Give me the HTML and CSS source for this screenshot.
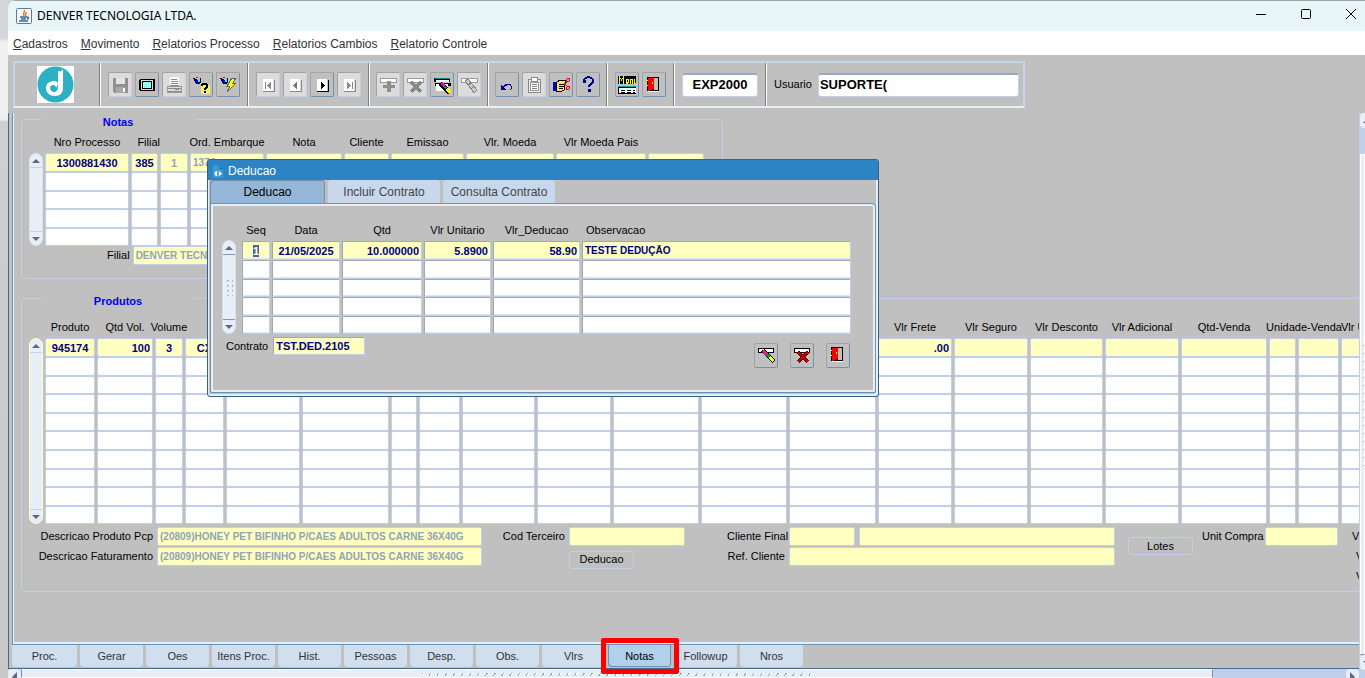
FILE: index.html
```html
<!DOCTYPE html>
<html lang="pt-BR">

<head>
	<meta charset="utf-8">
	<title>DENVER TECNOLOGIA LTDA.</title>
	<link rel="stylesheet" href="styles.css">
</head>

<body>
	<!-- shared icons -->
	<svg class="defs" aria-hidden="true">
		<symbol id="i-door" viewBox="0 0 18 18">
			<path d="M3 2h11v14H3z" fill="#fff"/><path d="M2 1h12v14H2z" fill="#000"/><path d="M9 2h4v12H9z" fill="#c0c0c0"/>
			<path d="M3 2h6v11H7v1H5v1H3z" fill="#f00"/><path d="M2 4h1v1H2zM2 9h1v1H2zM7 6h1v2H7z" fill="#ff0"/>
		</symbol>
		<symbol id="i-erase" viewBox="0 0 18 18">
			<path d="M1 2h16v5H1z" fill="#000"/><path d="M2 3h14v3H2z" fill="#fff"/>
			<path d="M4 5l4-2 10 11-3 3z" fill="#000"/><path d="M5 5h2l3 3-2 2z" fill="#f0c"/><path d="M8 4l2 3-1 1-3-4z" fill="#f22"/>
			<path d="M8 9l3-2 2 3-2 2z" fill="#093"/><path d="M11 12l3-2 3 4-2 2z" fill="#ff0"/>
		</symbol>
	</svg>

	<div class="window">
		<header class="titlebar">
			<svg class="java" viewBox="0 0 16 16">
				<rect x=".5" y=".5" width="15" height="15" rx="1" fill="#f4f6f8" stroke="#5a7898"/>
				<path d="M8 2c2 2-2 3 0 6M10 4c1 1-2 2 0 4" fill="none" stroke="#f07820" stroke-width="1.500"/>
				<path d="M4 9h7c2 0 2 2 0 2M5 11h5M3 13h9" fill="none" stroke="#3a6a9a" stroke-width="1.500"/>
			</svg>
			<span class="title">DENVER TECNOLOGIA LTDA.</span>
			<div class="winbuttons">
				<button aria-label="Minimizar"><svg viewBox="0 0 12 12"><path d="M1 6.500h10" /></svg></button>
				<button aria-label="Maximizar"><svg viewBox="0 0 12 12"><rect x="1.500" y="1.500" width="9" height="9" rx="1" /></svg></button>
				<button aria-label="Fechar"><svg viewBox="0 0 12 12"><path d="M1 1l10 10M11 1L1 11" /></svg></button>
			</div>
		</header>

		<nav class="menubar">
			<a href="#"><u>C</u>adastros</a>
			<a href="#"><u>M</u>ovimento</a>
			<a href="#"><u>R</u>elatorios Processo</a>
			<a href="#"><u>R</u>elatorios Cambios</a>
			<a href="#"><u>R</u>elatorio Controle</a>
		</nav>

		<div class="toolbar-area">
			<div class="toolbar">
				<div class="section logo">
					<svg viewBox="0 0 37 37">
						<rect width="37" height="37" fill="#fff"/><circle cx="18.500" cy="18.500" r="18" fill="#2eb0c4"/>
						<path fill-rule="evenodd" d="M21 5c2 1 4 0 5-2v19c0 5-3 8-8 8s-9-3-9-8 4-7 8-7c2 0 4 1 4 3l-2 4c0-2-1-3-3-3-1 0-3 1-3 3s2 4 4 4 4-2 4-4z" fill="#fff"/>
					</svg>
				</div>
				<div class="section">
					<button class="tool" disabled aria-label="Salvar"><svg viewBox="0 0 18 18"><path d="M2 2h15v15H3l-1-1z" fill="#909090"/><path d="M5 2h9v6H5z" fill="#e4e4e4"/><path d="M5 11h9v6H5z" fill="#a8a8a8"/><path d="M12 12h2v4h-2z" fill="#fff"/></svg></button>
					<button class="tool" aria-label="Tela"><svg viewBox="0 0 18 18"><path d="M2 3h14l1 1v10l-1 1H2l-1-1V4z" fill="#000"/><path d="M3 4h12v10H3z" fill="#ddd"/><path d="M4 5h10v8H4z" fill="#000"/><path d="M5 6h8v6H5z" fill="#8ff"/><path d="M5 7h8M5 9h8M5 11h8" stroke="#fff" stroke-dasharray="1"/></svg></button>
					<button class="tool" disabled aria-label="Imprimir"><svg viewBox="0 0 18 18"><path d="M5 1h9v9H5z" fill="#fff"/><path d="M6 3h6M6 5h7M6 7h7M5 9h9M2 12h14M2 15h14M10 13h4" stroke="#888"/><path d="M2 10h14v6H2z" fill="none" stroke="#999"/></svg></button>
					<button class="tool" aria-label="Entrar consulta"><svg viewBox="0 0 18 18"><path d="M9 9h9v9H9z" fill="#f0f060"/><path d="M1 2l3 1 2 1 3-2v5L6 8H4z" fill="#000"/><path d="M3 4h3v4H5z" fill="#00d"/><path d="M6 3h2v3H6z" fill="#0ff"/><path d="M4 1h2v1H4z" fill="#f00"/><path d="M10 10c0-3 5-3 5 0 0 2-2 2-2 4M13 15v2" fill="none" stroke="#000" stroke-width="2"/></svg></button>
					<button class="tool" aria-label="Executar consulta"><svg viewBox="0 0 18 18"><path d="M1 2l3 1 2 1 3-2v5L6 8H4z" fill="#000"/><path d="M3 4h3v4H5z" fill="#00d"/><path d="M6 3h2v3H6z" fill="#0ff"/><path d="M4 1h2v1H4z" fill="#f00"/><path d="M13 2h4l-3 5h3l-9 9 3-6H8z" fill="#ff0" stroke="#665"/></svg></button>
				</div>
				<div class="section">
					<button class="tool" disabled aria-label="Primeiro"><svg viewBox="0 0 18 18"><path d="M4 3h10v12H4z" fill="#fff"/><path d="M4 15h11V4" stroke="#888" fill="none"/><path d="M6 6h1v7H6zM12 6v7L8 9.500z" fill="#888"/></svg></button>
					<button class="tool" disabled aria-label="Anterior"><svg viewBox="0 0 18 18"><path d="M4 3h10v12H4z" fill="#fff"/><path d="M4 15h11V4" stroke="#888" fill="none"/><path d="M11 6v7L7 9.500z" fill="#777"/></svg></button>
					<button class="tool" aria-label="Proximo"><svg viewBox="0 0 18 18"><path d="M4 3h10v12H4z" fill="#fff"/><path d="M4 15h11V4" stroke="#000" fill="none"/><path d="M8 6v7l4-3.500z" fill="#000"/></svg></button>
					<button class="tool" disabled aria-label="Ultimo"><svg viewBox="0 0 18 18"><path d="M4 3h10v12H4z" fill="#fff"/><path d="M4 15h11V4" stroke="#888" fill="none"/><path d="M7 6v7l4-3.500zM12 6h1v7h-1z" fill="#888"/></svg></button>
				</div>
				<div class="section tight">
					<button class="tool" disabled aria-label="Inserir"><svg viewBox="0 0 18 18"><path d="M1 2h16v4H1z" fill="#fff" stroke="#999"/><path d="M8 5h4v4h4v3h-4v4H8v-4H4V9h4z" fill="#909090"/></svg></button>
					<button class="tool" disabled aria-label="Excluir"><svg viewBox="0 0 18 18"><path d="M1 2h16v4H1z" fill="#fff" stroke="#999"/><path d="M5 6l10 10M15 6L5 16" stroke="#888" stroke-width="3"/></svg></button>
					<button class="tool" aria-label="Limpar tela"><svg viewBox="0 0 18 18"><path d="M1 2h16v4H1zM2 7h16v3H2z" fill="#000"/><path d="M3 4h13v2H3zM3 8h12v7H3z" fill="#fff"/><path d="M2 2h15v1H2z" fill="#088"/><path d="M5 9l4-3 9 9-3 3z" fill="#000"/><path d="M7 8l2-2 3 3-2 2z" fill="#f0c"/><path d="M10 11l2-2 2 3-2 1z" fill="#093"/><path d="M12 14l3-2 3 3-2 2z" fill="#ff0"/></svg></button>
					<button class="tool" disabled aria-label="Limpar registro"><svg viewBox="0 0 18 18"><path d="M1 2h16v4H1z" fill="#fff" stroke="#999"/><path d="M5 5l3-2 9 11-3 3z" fill="#ccc" stroke="#888"/><path d="M8 9l3-2M11 13l3-3" stroke="#777"/></svg></button>
				</div>
				<div class="section tight">
					<button class="tool" aria-label="Desfazer"><svg viewBox="0 0 18 18"><path d="M3 14V8l2 3c3-5 9-4 9 0 0 2-1 3-2 3 2-3 1-5-1-5-2-1-3 1-5 3l3 2z" fill="#000080"/></svg></button>
					<button class="tool" disabled aria-label="Lista"><svg viewBox="0 0 18 18"><path d="M3 3h12v13H3z" fill="#eee" stroke="#888"/><path d="M6 1h6v4H6z" fill="#fff" stroke="#888"/><path d="M5 6h8v8H5z" fill="#fff" stroke="#999"/><path d="M7 8h5M7 10h5M7 12h5" stroke="#888"/></svg></button>
					<button class="tool" aria-label="Editar"><svg viewBox="0 0 18 18"><path d="M1 6h3v9H1z" fill="#00c"/><path d="M4 7l4-3h5v3h-1v7l-2 1H4z" fill="#fd6" stroke="#000"/><path d="M7 8h6M7 10h5M7 12h4" stroke="#000"/><path d="M12 9l4-4M12 7l4 4" stroke="#e00"/><circle cx="16" cy="4" r="1.500" fill="none" stroke="#e00"/><circle cx="16" cy="12" r="1.500" fill="none" stroke="#e00"/></svg></button>
					<button class="tool" aria-label="Ajuda"><svg viewBox="0 0 18 18"><path d="M5 5c0-5 9-5 9 0 0 3-4 3-4 6" fill="none" stroke="#000090" stroke-width="2"/><path d="M9 13h3v3H9zM4 4h3v3H4z" fill="#000090"/></svg></button>
				</div>
				<div class="section">
					<button class="tool" aria-label="Menu"><svg viewBox="0 0 18 18"><path d="M0 0h18v8H0z" fill="#000"/><path d="M1.500 8V1l2 3 2-3v7M8 6h2V3H8v4h2M12.500 8V3h2v5M16.500 3v4h2" fill="none" stroke="#ff0"/><path d="M0 10h18v8H0z" fill="#000"/><path d="M1 12h17v5H1z" fill="#fff"/><path d="M0 10h18v1H0z" fill="#0aa"/><path d="M3 14.500h14M3 16.500h14" stroke="#000" stroke-dasharray="4 2"/></svg></button>
					<button class="tool" aria-label="Sair"><svg><use href="#i-door"/></svg></button>
				</div>
				<div class="section">
					<input class="big code" value="EXP2000" aria-label="Programa">
				</div>
				<div class="section user">
					<label for="usuario">Usuario</label>
					<input class="big" id="usuario" value="SUPORTE(">
				</div>
			</div>
		</div>

		<div class="main">
			<div class="frame">
				<div class="canvas">
					<fieldset class="notas">
						<legend><span>Notas</span></legend>
						<div class="block">
							<div class="scroll"><button class="up" aria-label="Acima"></button><button class="down" aria-label="Abaixo"></button></div>
							<table class="grid" id="notas"></table>
						</div>
						<div class="filial">
							<label for="filial">Filial</label>
							<input class="field dim" id="filial" value="DENVER TECNOLOGIA LTDA.">
						</div>
					</fieldset>

					<fieldset class="produtos">
						<legend><span>Produtos</span></legend>
						<div class="block">
							<div class="scroll yellow"><button class="up" aria-label="Acima"></button><button class="down" aria-label="Abaixo"></button></div>
							<table class="grid" id="produtos"></table>
						</div>
						<div class="details">
							<div class="group desc">
								<label for="pcp">Descricao Produto Pcp</label>
								<input class="field dim" id="pcp" value="(20809)HONEY PET BIFINHO P/CAES ADULTOS CARNE 36X40G">
								<label for="fat">Descricao Faturamento</label>
								<input class="field dim" id="fat" value="(20809)HONEY PET BIFINHO P/CAES ADULTOS CARNE 36X40G">
							</div>
							<div class="group terceiro">
								<label for="terc">Cod Terceiro</label>
								<input class="field" id="terc">
								<button class="btn">Deducao</button>
							</div>
							<div class="group cliente">
								<label for="final">Cliente Final</label>
								<input class="field" id="final">
								<input class="field" aria-label="Nome cliente final">
								<label for="ref">Ref. Cliente</label>
								<input class="field wide" id="ref">
							</div>
							<button class="btn lotes">Lotes</button>
							<div class="group compra">
								<label for="compra">Unit Compra</label>
								<input class="field" id="compra">
							</div>
							<div class="group totals">
								<span>Vlr</span>
								<span class="in">Vlr</span>
								<span class="in">Vlr</span>
							</div>
						</div>
					</fieldset>
				</div>

				<div class="pages">
					<button>Proc.</button>
					<button>Gerar</button>
					<button>Oes</button>
					<button>Itens Proc.</button>
					<button>Hist.</button>
					<button>Pessoas</button>
					<button>Desp.</button>
					<button>Obs.</button>
					<button>Vlrs</button>
					<button class="active">Notas</button>
					<button>Followup</button>
					<button>Nros</button>
				</div>
			</div>
			<div class="vbar"><button class="up" aria-label="Acima"></button><div class="thumb"><i></i></div><button class="down" aria-label="Abaixo"></button></div>
			<div class="hbar"><button class="left" aria-label="Esquerda"></button><div class="thumb"><i></i></div><button class="right" aria-label="Direita"></button></div>
		</div>
	</div>

	<div class="dialog" role="dialog" aria-label="Deducao">
		<div class="dialog-title">
			<svg viewBox="0 0 14 16"><path d="M1 1h8l4 4v11H1z" fill="#3a9ad8"/><path d="M9 1v4h4" fill="none" stroke="#1c6ca8"/><path d="M8 8l4 3-4 3zM6 8v6c-2 0-3-1-3-3s1-3 3-3zM1 11h2" fill="#fff"/></svg>
			Deducao
		</div>
		<div class="dialog-tabs">
			<button class="active">Deducao</button>
			<button>Incluir Contrato</button>
			<button>Consulta Contrato</button>
		</div>
		<div class="dialog-body">
			<div class="block">
				<div class="scroll grip"><button class="up" aria-label="Acima"></button><i></i><button class="down" aria-label="Abaixo"></button></div>
				<table class="grid inset" id="deducao"></table>
			</div>
			<div class="contrato">
				<label for="contrato">Contrato</label>
				<input class="field" id="contrato" value="TST.DED.2105">
				<div class="actions">
					<button class="tool" aria-label="Limpar"><svg><use href="#i-erase"/></svg></button>
					<button class="tool" aria-label="Excluir"><svg viewBox="0 0 18 18"><path d="M1 2h16v5H1z" fill="#000"/><path d="M2 3h14v3H2z" fill="#fff"/><path d="M5 6l10 10M15 6L5 16" stroke="#400" stroke-width="4"/><path d="M5 6l10 10M15 6L5 16" stroke="#c00000" stroke-width="2.500"/></svg></button>
					<button class="tool" aria-label="Sair"><svg><use href="#i-door"/></svg></button>
				</div>
			</div>
		</div>
	</div>

	<div class="marker"></div>

	<script src="script.js"></script>
</body>

</html>
```
FILE: styles.css
```css
* {
	box-sizing: border-box;
}

body {
	margin: 0;
	height: 100vh;
	overflow: hidden;
	position: relative;
	background: linear-gradient(#d4d6da 0, #d4d6da 38px, #f0f0f0 42px, #f0f0f0 119px, #cfcfcf 122px, #c8c8c8);
	font: 11px/15px "Liberation Sans", Arial, sans-serif;
	color: #000;
}

button,
input {
	font: inherit;
	color: inherit;
	margin: 0;
	padding: 0;
	outline: none;
}

.defs {
	position: absolute;
	width: 0;
	height: 0;
}

.window {
	margin-left: 8px;
	height: 100vh;
	display: flex;
	flex-direction: column;
	background: #c0c0c0;
	border-top-left-radius: 8px;
	overflow: hidden;
}

/* title + menu */

.titlebar {
	height: 31px;
	flex: none;
	display: flex;
	align-items: center;
	gap: 5px;
	padding-left: 8px;
	background: #e8f6f7;
	border-top: 1px solid #a0a4a8;
	font: 12px/16px "Noto Sans", sans-serif;
}

.java {
	width: 16px;
	height: 16px;
}

.winbuttons {
	margin-left: auto;
	margin-right: -8px;
	display: flex;
}

.winbuttons button {
	width: 45px;
	height: 30px;
	border: 0;
	background: none;
}

.winbuttons svg {
	width: 12px;
	height: 12px;
	fill: none;
	stroke: #000;
}

.menubar {
	height: 24px;
	flex: none;
	display: flex;
	align-items: center;
	gap: 13px;
	padding: 2px 0 0 5px;
	background: #fff;
	font-size: 12px;
}

.menubar a {
	color: #333;
	text-decoration: none;
}

/* toolbar */

.toolbar-area {
	flex: none;
	padding: 6px 5px 5px;
}

.toolbar {
	display: flex;
	width: max-content;
	height: 47px;
	border: 2px solid #c4d6ec;
	border-bottom-color: #e8f0fa;
}

.section {
	display: flex;
	align-items: center;
	justify-content: center;
	gap: 3px;
	padding: 0 7px;
	border-right: 1px solid #808080;
	box-shadow: 1px 0 #fff;
	margin-right: 1px;
}

.section.tight {
	padding: 0 6px;
}

.section:last-child {
	border: 0;
	box-shadow: none;
	margin: 0;
	padding-right: 4px;
}

.section.logo {
	padding: 0 25px 0 22px;
}

.logo svg {
	width: 37px;
	height: 37px;
}

.tool {
	width: 24px;
	height: 25px;
	display: flex;
	align-items: center;
	justify-content: center;
	background: #c0c0c0;
	border: 1px solid #a0a4a8;
	border-right-color: #7090b4;
	border-bottom-color: #7090b4;
	border-radius: 2px;
}

.tool:disabled {
	background: #dcdcdc;
	border-right-color: #c0d0e8;
	border-bottom-color: #c0d0e8;
}

.tool svg {
	width: 18px;
	height: 18px;
	flex: none;
	shape-rendering: crispEdges;
}

.big {
	width: 201px;
	height: 24px;
	padding: 0 1px 2px;
	border: 1px solid #c0d0e8;
	border-top: 2px solid #98a8c0;
	border-radius: 3px;
	background: #fff;
	font-size: 13px;
	font-weight: bold;
}

.code {
	width: 76px;
	text-align: center;
}

.user {
	gap: 6px;
}

/* work area */

.main {
	flex: 1;
	min-height: 0;
	display: grid;
	grid-template: 1fr 9px / minmax(0, 1fr) 6px;
}

.frame {
	min-height: 0;
	display: flex;
	flex-direction: column;
	padding-left: 3px;
	border-left: 1px solid #48688f;
	border-bottom: 1px solid #48688f;
}

.canvas {
	flex: 1;
	min-height: 0;
	overflow: hidden;
	padding-left: 8px;
	border-left: 1px solid #7090b4;
	border-bottom: 1px solid #7090b4;
	box-shadow: inset 1px -2px #e8eef6;
}

fieldset {
	margin: 0;
	min-width: 0;
	padding: 0 0 0 7px;
	border: 1px solid #c0d0e8;
	border-radius: 4px;
}

legend {
	width: 154px;
	height: 13px;
	margin-left: 12px;
	padding: 0;
	line-height: 19px;
	font-weight: bold;
	color: #0000f0;
}

legend span {
	display: block;
	text-align: center;
}

.notas {
	width: 702px;
	padding-top: 7px;
	padding-bottom: 13px;
}

.produtos {
	margin-top: 13px;
	margin-right: -80px;
	padding-top: 13px;
	padding-bottom: 5px;
}

.block {
	display: flex;
	gap: 2px;
}

.scroll {
	width: 14px;
	flex: none;
	margin-top: 20px;
	display: flex;
	flex-direction: column;
	justify-content: space-between;
	align-items: center;
	background: #e8eef6;
	border: 1px solid #d8e2f0;
	border-radius: 7px;
}

.yellow {
	border-color: #ffffc0;
}

.scroll button {
	width: 12px;
	height: 14px;
	border: 0;
	background: none;
	display: flex;
	align-items: center;
	justify-content: center;
}

.scroll .up {
	border-bottom: 1px solid #c0d0e8;
}

.scroll .down {
	border-top: 1px solid #c0d0e8;
}

.up::before,
.down::before {
	content: "";
	border: 4px solid transparent;
	border-top-width: 0;
	border-bottom-color: #606880;
}

.down::before {
	border-width: 4px 4px 0;
	border-color: #606880 transparent;
}

.grip .up,
.grip .down {
	border-color: #8098b8;
}

.grip i {
	width: 8px;
	height: 18px;
	background: radial-gradient(circle, #a8b8d0 1px, transparent 1px) 0 0 / 5px 5px;
}

/* record grids */

.grid {
	table-layout: fixed;
	border-collapse: collapse;
	flex: none;
}

.grid th,
.grid td {
	padding: 0;
	vertical-align: top;
}

.grid th {
	height: 20px;
	font-weight: normal;
	line-height: 18px;
	white-space: nowrap;
	padding-right: 2px;
}

/* lets a label wider than its column stay centred on it */
.grid th span {
	display: inline-block;
	margin: 0 -10px;
}

.grid .start {
	text-align: left;
	padding-left: 14px;
}

.grid .end {
	text-align: right;
	padding-right: 10px;
}

.grid .flush {
	text-align: left;
	padding-left: 10px;
}

.grid td {
	height: 19px;
	padding-right: 2px;
}

/* ten records fill the same height as two groups of five */
.grid tbody tr:nth-child(5n+3) td,
.grid tbody tr:nth-child(5n) td {
	height: 18px;
}

.grid input {
	display: block;
	width: 100%;
	height: 19px;
	padding: 0 2px;
	background: #fff;
	border: 1px solid #c0d0e8;
	border-radius: 2px;
	text-align: center;
	font-weight: bold;
	color: #000080;
}

.grid tbody tr:nth-child(5n+3) input,
.grid tbody tr:nth-child(5n) input {
	height: 18px;
}

.grid tbody tr:first-child input {
	background: #ffffc0;
}

.grid .num {
	text-align: right;
}

.grid .text {
	text-align: left;
	font-size: 10px;
}

.grid .dim,
.dim {
	color: #90a4b8;
}

.inset th {
	line-height: 21px;
}

.inset input {
	border-top-color: #a0a8b4;
	border-left-color: #a0a8b4;
	box-shadow: inset 0 -1px #dce6f4;
}

/* loose fields */

.field {
	height: 19px;
	min-width: 0;
	padding: 0 2px;
	background: #ffffc0;
	border: 1px solid #c0d0e8;
	border-radius: 2px;
	font-weight: bold;
}

.field.dim {
	font-size: 10px;
}

.filial {
	display: flex;
	align-items: center;
	gap: 3px;
	padding-left: 78px;
}

.filial .field {
	width: 400px;
}

.details {
	display: flex;
	align-items: flex-start;
	margin-top: 2px;
	height: 60px;
}

.group {
	display: grid;
	grid-auto-rows: 20px;
	column-gap: 4px;
	align-items: center;
	text-align: right;
	white-space: nowrap;
	flex: none;
}

.desc {
	grid-template-columns: 124px 325px;
}

.terceiro {
	grid-template-columns: 63px 116px;
	margin-left: 20px;
}

.terceiro .btn {
	grid-column: 2;
	width: 65px;
	margin-top: 7px;
}

.cliente {
	grid-template-columns: 58px 66px 256px;
	margin-left: 42px;
}

.wide {
	grid-column: span 2;
}

.compra {
	grid-template-columns: 59px 73px;
	margin-left: 9px;
}

.totals {
	margin-left: 14px;
	text-align: left;
}

.in {
	padding-left: 4px;
}

.btn {
	width: 65px;
	height: 18px;
	flex: none;
	background: #c0c0c0;
	border: 1px solid #c0d0e8;
	border-radius: 3px;
}

.lotes {
	margin: 11px 0 0 13px;
}

/* page tabs */

.pages {
	display: flex;
	gap: 3px;
	height: 23px;
	flex: none;
}

.pages button {
	width: 63px;
	height: 22px;
	border: 0;
	border-radius: 0 0 4px 4px;
	background: #d0deee;
	color: #333;
}

.pages button:first-child {
	width: 65px;
}

.pages .active {
	background: #b0d0ec;
	box-shadow: inset 1px -1px #7090b4, inset -1px 0 #7090b4;
	color: #000;
}

/* window scrollbars */

.vbar,
.hbar {
	background: #c0d0e8;
	display: flex;
	overflow: hidden;
}

.vbar {
	flex-direction: column;
	padding-left: 1px;
	grid-row: 1 / 3;
	grid-column: 2;
}

.vbar button,
.hbar button {
	border: 0;
	background: #e8eef6;
	flex: none;
	width: 14px;
	height: 15px;
	display: flex;
	align-items: center;
	justify-content: center;
	border-radius: 4px;
}

.vbar .thumb {
	flex: 1;
	margin: 26px 0 0;
	border: 1px solid #fff;
	border-bottom-color: #7090b4;
	background: #e8eef6;
	display: flex;
	align-items: center;
}

.vbar i {
	width: 3px;
	height: 124px;
	margin-left: 2px;
	background: repeating-linear-gradient(#fff 0 2px, #90a4c0 2px 3px, transparent 3px 8px);
}

.vbar .down {
	margin-bottom: 8px;
}

.hbar button {
	width: 13px;
}

.left::before,
.right::before {
	content: "";
	border: 5px solid transparent;
	border-left-width: 0;
	border-right-color: #606880;
}

.right::before {
	border-width: 5px 0 5px 5px;
	border-color: transparent transparent transparent #606880;
}

.hbar .thumb {
	width: 1192px;
	flex: none;
	margin-right: auto;
	border: 1px solid #fff;
	border-left-color: #7090b4;
	border-right-color: #7090b4;
	background: #e8eef6;
	display: flex;
	justify-content: center;
}

.hbar i {
	width: 390px;
	height: 3px;
	margin: 3px 0;
	background: repeating-linear-gradient(120deg, #90a4c0 0 1px, #fff 1px 2px, transparent 2px 7px);
}

/* Deducao dialog */

.dialog {
	position: absolute;
	left: 207px;
	top: 159px;
	width: 672px;
	padding: 0 2px 3px;
	background: #c0c0c0;
	border: 1px solid #38608c;
	border-radius: 3px;
	box-shadow: inset -2px -2px #e8eef6, inset 1px 0 #e8eef6;
}

.dialog-title {
	display: flex;
	align-items: center;
	gap: 4px;
	height: 20px;
	margin: 0 -2px;
	padding: 2px 4px 0;
	background: #2c84c4;
	color: #fff;
	font-size: 12px;
}

.dialog-title svg {
	width: 12px;
	height: 14px;
}

.dialog-tabs {
	display: flex;
	gap: 3px;
}

.dialog-tabs button {
	width: 112px;
	height: 23px;
	padding-top: 2px;
	border: 0;
	border-radius: 4px 4px 0 0;
	background: #c8d8ec;
	color: #444;
	font-size: 12px;
}

.dialog-tabs .active {
	width: 115px;
	background: #94b6d8;
	box-shadow: inset 1px 1px #7090b4, inset -1px 0 #7090b4;
	color: #000;
}

.dialog-body {
	padding: 15px 0 36px 11px;
	border: 1px solid #7090b4;
	border-radius: 0 4px 2px 2px;
	box-shadow: inset 0 0 0 2px #e8eef6;
}

.dialog-body .block {
	gap: 6px;
	padding-top: 1px;
}

.contrato {
	display: flex;
	align-items: center;
	gap: 5px;
	margin: 2px 25px 0 4px;
	height: 20px;
}

.contrato .field {
	width: 92px;
	height: 18px;
	border-top-color: #a0a8b4;
	border-left-color: #a0a8b4;
	color: #000080;
}

.actions {
	display: flex;
	gap: 12px;
	margin: 18px 0 0 auto;
}

.seq::selection {
	background: #48688f;
	color: #fff;
}

/* highlight around the current page tab */
.marker {
	position: absolute;
	left: 601px;
	bottom: 4px;
	width: 78px;
	height: 36px;
	border: 5px solid #f00;
	border-radius: 2px;
	pointer-events: none;
}
```
FILE: script.js
```js
// head: [label, colspan, class]   cols: [width, class, first value]
var grids = {
	notas: {
		rows: 5,
		head: [['Nro Processo'], ['Filial', 1, 'end'], [''], ['Ord. Embarque'], ['Nota'], ['Cliente'], ['Emissao'], ['Vlr. Moeda'], ['Vlr Moeda Pais'], ['']],
		cols: [[86, '', '1300881430'], [29, '', '385'], [30, 'dim', '1'], [76, 'text dim', '1374'], [78], [47], [75], [90], [92], [58]]
	},
	produtos: {
		rows: 10,
		head: [['Produto'], ['Qtd Vol.'], ['Volume'], [''], [''], [''], [''], [''], [''], [''], [''], [''], [''], ['Vlr Frete'], ['Vlr Seguro'], ['Vlr Desconto'], ['Vlr Adicional'], ['Qtd-Venda'], ['Unidade-Venda', 2], ['Vlr Unit', 1, 'flush']],
		cols: [[52, '', '945174'], [58, 'num', '100'], [30, '', '3'], [41, '', 'CX'], [76], [89], [28], [43], [75], [76], [88], [88], [89], [76, 'num', '.00'], [76], [75], [76], [88], [29], [43], [76]]
	},
	deducao: {
		rows: 5,
		head: [['Seq'], ['Data'], ['Qtd'], ['Vlr Unitario'], ['Vlr_Deducao'], ['Observacao', 1, 'start']],
		cols: [[30, 'seq', '1'], [70, '', '21/05/2025'], [82, 'num', '10.000000'], [69, 'num', '5.8900'], [89, 'num', '58.90'], [271, 'text', 'TESTE DEDUÇÃO']]
	}
};

for (var id in grids) {
	var g = grids[id];
	var width = 0;
	var html = '<colgroup>';
	g.cols.forEach(function (c) {
		width += c[0];
		html += '<col style="width:' + c[0] + 'px">';
	});
	html += '</colgroup><thead><tr>';
	g.head.forEach(function (h) {
		html += '<th colspan="' + (h[1] || 1) + '" class="' + (h[2] || '') + '"><span>' + h[0] + '</span></th>';
	});
	html += '</tr></thead><tbody>';
	for (var r = 0; r < g.rows; r++) {
		html += '<tr>';
		g.cols.forEach(function (c, i) {
			html += '<td><input class="' + (c[1] || '') + '" value="' + (r == 0 && c[2] || '') + '" aria-label="' + id + ' ' + (r + 1) + '.' + (i + 1) + '"></td>';
		});
		html += '</tr>';
	}
	var table = document.getElementById(id);
	table.style.width = width + 'px';
	table.innerHTML = html + '</tbody>';
}

// cursor starts on the first record of the dialog
document.querySelector('.seq').select();
```
